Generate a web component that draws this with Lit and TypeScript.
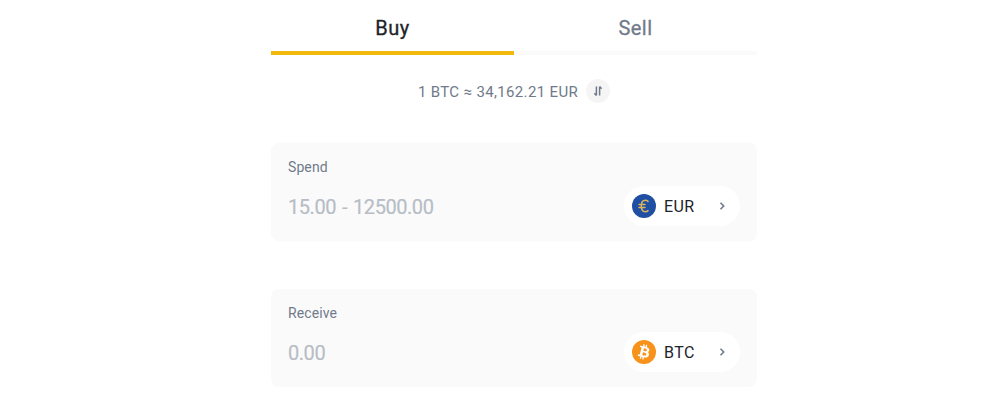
import { LitElement, html, css, svg } from "lit";
import { customElement } from "lit/decorators.js";

const eur = svg`<svg class="coin" viewBox="0 0 24 24"><circle cx="12" cy="12" r="12" fill="#1f4fa3"/><path d="M16 7.400c-.7-.7-1.600-1.100-2.600-1.100-2.500 0-4.100 2.300-4.100 5.700s1.600 5.700 4.100 5.700c1 0 1.900-.4 2.600-1.100M7 10.600h6M7 13.400h6" fill="none" stroke="#d9b45c" stroke-width="1.500" stroke-linecap="round"/></svg>`;
const btc = svg`<svg class="coin" viewBox="0 0 24 24"><circle cx="12" cy="12" r="12" fill="#f7931a"/><path fill="#fff" fill-rule="evenodd" transform="translate(12 12) scale(1.1) translate(-12 -12)" d="M16.900 10.500c.2-1.500-.9-2.300-2.400-2.800l.5-2-1.200-.3-.5 1.900-1-.2.500-2-1.200-.3-.5 2-2.500-.6-.3 1.300s.9.200.9.200c.5.100.6.400.5.700l-1.400 5.500c-.1.200-.2.400-.6.300l-.9-.2-.6 1.400 2.400.6-.5 2 1.200.3.500-2 1 .2-.5 2 1.200.3.500-2c2.100.4 3.700.2 4.300-1.700.5-1.500 0-2.400-1.100-3 .8-.2 1.400-.7 1.500-1.800zm-2.800 3.900c-.4 1.500-2.900.7-3.700.5l.7-2.700c.8.200 3.400.6 3 2.200zm.4-4c-.3 1.400-2.400.7-3.100.5l.6-2.400c.7.200 2.900.5 2.500 1.900z"/></svg>`;
const chevron = svg`<svg class="chev" viewBox="0 0 8 10"><path d="M2.500 1.800 5.700 5 2.500 8.200" fill="none" stroke="#707a8a" stroke-width="1.600"/></svg>`;
const swap = svg`<svg class="swap" viewBox="0 0 12 12"><path d="M4.400 1.500v9M4.400 10.500 2.400 8.300M7.600 10.500v-9M7.600 1.500l2 2.200" fill="none" stroke="#707a8a" stroke-width="1.500"/></svg>`;

@customElement("app-root")
export class AppRoot extends LitElement {
  static styles = css`
    :host {
      display: block;
      width: 1000px;
      height: 412px;
      background: #fff;
      overflow: hidden;
      font-family: Roboto, "Noto Sans", sans-serif;
    }
    .wrap {
      width: 486px;
      margin-left: 271px;
      display: flex;
      flex-direction: column;
    }
    .tabs {
      display: flex;
    }
    .tab {
      flex: 1;
      height: 55px;
      box-sizing: border-box;
      display: flex;
      justify-content: center;
      padding-top: 15px;
      font-size: 20px;
      line-height: 26px;
      font-weight: 400;
      letter-spacing: 0.5px;
      -webkit-text-stroke: 0.3px currentColor;
      color: #707a8a;
      border-bottom: 4px solid #fafafa;
    }
    .tab.active {
      color: #1e2329;
      border-bottom-color: #f0b90b;
    }
    .rate {
      height: 24px;
      margin-top: 24px;
      display: flex;
      justify-content: center;
      align-items: center;
      gap: 8px;
      font-size: 15px;
      letter-spacing: 0.35px;
      color: #707a8a;
    }
    .ratetext {
      padding-top: 2px;
    }
    .swapbtn {
      width: 24px;
      height: 24px;
      border-radius: 50%;
      background: #f5f5f5;
      display: flex;
      align-items: center;
      justify-content: center;
    }
    .swap {
      width: 12px;
      height: 12px;
    }
    .cards {
      margin-top: 40px;
      display: flex;
      flex-direction: column;
      gap: 48px;
    }
    .card {
      height: 98px;
      box-sizing: border-box;
      background: #fafafa;
      border-radius: 8px;
      padding: 16px 17px 15px;
      display: flex;
      flex-direction: column;
    }
    .label {
      font-size: 14px;
      line-height: 17px;
      letter-spacing: 0.1px;
      color: #707a8a;
    }
    .row {
      margin-top: 10px;
      display: flex;
      justify-content: space-between;
      align-items: center;
    }
    .value {
      font-size: 20px;
      letter-spacing: -0.45px;
      word-spacing: 1.5px;
      padding-top: 2px;
      -webkit-text-stroke: 0.2px currentColor;
      color: #b7bdc6;
    }
    .pill {
      width: 116px;
      height: 40px;
      box-sizing: border-box;
      background: #fff;
      border-radius: 20px;
      padding: 0 14px 0 8px;
      display: flex;
      align-items: center;
      font-size: 16px;
      font-weight: 400;
      letter-spacing: 0.4px;
      color: #1e2329;
    }
    .coin {
      width: 24px;
      height: 24px;
      flex: none;
    }
    .code {
      margin-left: 8px;
      flex: 1;
    }
    .chev {
      width: 8px;
      height: 10px;
      flex: none;
    }
  `;

  private card(label: string, value: string, icon: unknown, code: string) {
    return html`<div class="card">
      <div class="label">${label}</div>
      <div class="row">
        <div class="value">${value}</div>
        <div class="pill">${icon}<span class="code">${code}</span>${chevron}</div>
      </div>
    </div>`;
  }

  render() {
    return html`<div class="wrap">
      <div class="tabs">
        <div class="tab active">Buy</div>
        <div class="tab">Sell</div>
      </div>
      <div class="rate">
        <span class="ratetext">1 BTC ≈ 34,162.21 EUR</span>
        <span class="swapbtn">${swap}</span>
      </div>
      <div class="cards">
        ${this.card("Spend", "15.00 - 12500.00", eur, "EUR")}
        ${this.card("Receive", "0.00", btc, "BTC")}
      </div>
    </div>`;
  }
}
